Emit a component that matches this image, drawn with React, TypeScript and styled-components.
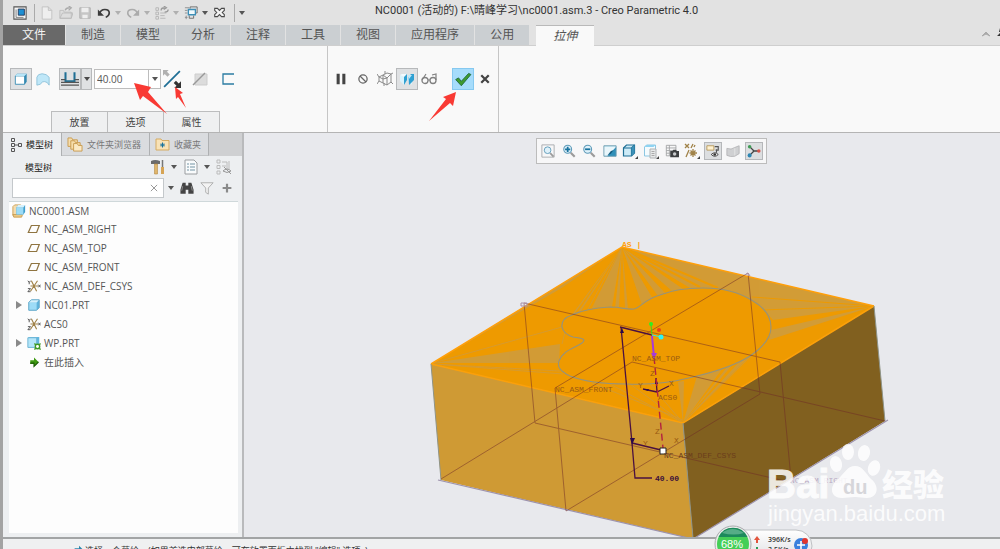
import React from "react";
import styled, { createGlobalStyle, css } from "styled-components";

const GlobalStyle = createGlobalStyle`
  *, *::before, *::after { box-sizing: border-box; }
  body {
    margin: 0;
    background: #a3a3a3;
    color: #4a4a4a;
    font-family: "Open Sans", "Noto Sans CJK SC", sans-serif;
    font-size: 12px;
  }
  button, input {
    margin: 0;
    padding: 0;
    border: 0;
    background: none;
    color: inherit;
    font: inherit;
  }
  ul { margin: 0; padding: 0; list-style: none; }
`;

/* ---------- shell ---------- */

const Window = styled.div`
  display: flex;
  flex-direction: column;
  height: 100vh;
  margin-left: 3px;
  overflow: hidden;
  position: relative;
  background: #e2e2e2;
`;

const TitleBar = styled.header`
  display: flex;
  align-items: center;
  height: 25px;
  flex: none;
`;

const QuickAccess = styled.div`
  display: flex;
  align-items: center;
  flex: 0 0 372px;
  height: 22px;
  padding-left: 7px;
`;

const Title = styled.h1`
  margin: 0;
  height: 22px;
  line-height: 22px;
  font-family: Roboto, "Noto Sans CJK SC", sans-serif;
  font-size: 11px;
  font-weight: 400;
  color: #333;
  white-space: nowrap;
  align-self: flex-start;
`;

const QuickButton = styled.button`
  display: flex;
  align-items: center;
  justify-content: center;
  width: 19px;
  height: 20px;
`;

const CaretButton = styled(QuickButton)<{ $dim?: boolean }>`
  width: 10px;
  color: ${(p) => (p.$dim ? "#b0b0b0" : "#555")};
`;

const Divider = styled.span`
  width: 1px;
  height: 18px;
  margin: 0 2px 0 5px;
  background: #aaa;
`;

const TabBar = styled.nav`
  display: flex;
  align-items: flex-end;
  gap: 1px;
  height: 21px;
  flex: none;
  border-bottom: 1px solid #cfcfcf;
`;

const RibbonTab = styled.button<{ $kind?: "file" | "active" }>`
  height: 20px;
  padding: 0 15px;
  line-height: 20px;
  background: #cbcfd2;
  color: #555;
  ${(p) =>
    p.$kind === "file" &&
    css`
      padding: 0 19px;
      background: #696969;
      color: #f4f4f4;
    `}
  ${(p) =>
    p.$kind === "active" &&
    css`
      height: 21px;
      margin: 0 0 -1px 6px;
      padding: 0 17px;
      border-top: 1px solid #b9b9b9;
      background: #f9f9f9;
      font-style: italic;
      line-height: 18px;
    `}
`;

const TabBarTools = styled.div`
  display: flex;
  align-items: center;
  gap: 6px;
  height: 26px;
  margin-left: auto;
  overflow: hidden;
`;

/* ---------- ribbon ---------- */

const Ribbon = styled.section`
  position: relative;
  display: flex;
  height: 87px;
  flex: none;
  background: #f9f9f9;
  border-bottom: 1px solid #b4b4b4;
`;

const RibbonGroup = styled.div<{ $width: number; $pad: number }>`
  display: flex;
  flex-direction: column;
  justify-content: space-between;
  flex: 0 0 ${(p) => p.$width}px;
  padding: 22px 0 0 ${(p) => p.$pad}px;
  border-right: 1px solid #c6c6c6;
`;

const ControlRow = styled.div`
  display: flex;
  align-items: center;
  height: 22px;
`;

const ToolButton = styled.button<{ $tone?: "pressed" | "ok"; $before?: number; $narrow?: boolean }>`
  display: flex;
  align-items: center;
  justify-content: center;
  flex: none;
  width: ${(p) => (p.$narrow ? 11 : 22)}px;
  height: 22px;
  margin-left: ${(p) => p.$before ?? 0}px;
  border: 1px solid transparent;
  ${(p) =>
    p.$tone === "pressed" &&
    css`
      background: #dfe1e3;
      border-color: #b7b9bb;
    `}
  ${(p) =>
    p.$tone === "ok" &&
    css`
      background: #a6dcfb;
      border-color: #86c9f0;
    `}
`;

const Combo = styled.div`
  display: flex;
  width: 67px;
  height: 20px;
  margin-left: 2px;
  border: 1px solid #bdbdbd;
  background: #fff;
`;

const ComboInput = styled.input`
  flex: 1;
  min-width: 0;
  padding: 0 2px;
  font-size: 10px;
  color: #555;
`;

const ComboCaret = styled(CaretButton)`
  width: 12px;
  height: 18px;
  border-left: 1px solid #bdbdbd;
`;

const PanelTabs = styled.div`
  display: flex;
  margin-left: 41px;
`;

const PanelTab = styled.button`
  width: 57px;
  height: 21px;
  margin-right: -1px;
  padding-top: 1px;
  border: 1px solid #bcbdbe;
  border-bottom: 0;
  background: #eff0f1;
  font-size: 10px;
  line-height: 19px;
  color: #444;
`;

const Pointers = styled.svg`
  position: absolute;
  left: 0;
  top: 0;
  pointer-events: none;
`;

/* ---------- model tree ---------- */

const Main = styled.main`
  display: flex;
  flex: 1;
  min-height: 0;
`;

const SidePanel = styled.aside`
  display: flex;
  flex-direction: column;
  flex: 0 0 241px;
  background: #edeff1;
  border-right: 2px solid #b9babc;
`;

const SideTabs = styled.div`
  display: flex;
  height: 23px;
  background: #cfd0d2;
`;

const SideTab = styled.button<{ $active?: boolean; $width: number }>`
  display: flex;
  align-items: center;
  gap: 4px;
  width: ${(p) => p.$width}px;
  padding-left: ${(p) => (p.$active ? 7 : 5)}px;
  border-right: 1px solid #aeb0b2;
  border-bottom: ${(p) => (p.$active ? "0" : "1px solid #c3c5c7")};
  background: ${(p) => (p.$active ? "#edeff1" : "#dadcdf")};
  color: ${(p) => (p.$active ? "#222" : "#777")};
  font-size: 9px;
  white-space: nowrap;
`;

const TreeHeader = styled.div`
  display: flex;
  align-items: center;
  height: 22px;
  padding: 0 9px 0 22px;
`;

const TreeTitle = styled.h2`
  flex: 1;
  margin: 0;
  font-size: 9px;
  font-weight: 400;
  color: #222;
`;

const HeaderTools = styled.div`
  display: flex;
  align-items: center;
  gap: 2px;
`;

const SearchRow = styled.div`
  display: flex;
  align-items: center;
  height: 20px;
  padding: 0 5px 0 9px;
`;

const SearchBox = styled.div`
  display: flex;
  align-items: center;
  width: 152px;
  height: 20px;
  border: 1px solid #c4c8cb;
  background: #fff;
`;

const SearchInput = styled.input`
  flex: 1;
  min-width: 0;
  height: 16px;
  padding: 0 4px;
  font-size: 10px;
`;

const SearchTools = styled.div`
  display: flex;
  align-items: center;
  flex: 1;
  justify-content: space-between;
  margin-left: 2px;
`;

const TreeList = styled.ul`
  flex: 1;
  margin: 3px 4px 4px 6px;
  border-top: 1px solid #cfd8da;
  background: #fdfdfd;
`;

const TreeRow = styled.li<{ $root?: boolean }>`
  display: flex;
  align-items: center;
  height: ${(p) => (p.$root ? 17 : 19)}px;
  padding-left: ${(p) => (p.$root ? 3 : 7)}px;
  font-size: 10px;
  color: #555;
`;

const Expander = styled.span`
  display: flex;
  width: 11px;
`;

const NodeIcon = styled.span`
  display: flex;
  justify-content: center;
  width: 14px;
  margin-right: 3px;
`;

/* ---------- graphics area ---------- */

const Viewport = styled.section`
  position: relative;
  flex: 1;
  min-width: 0;
  overflow: hidden;
  background: #e8e9ed;
`;

const Scene = styled.svg`
  display: block;
  width: 100%;
  height: 100%;
`;

const ViewToolbar = styled.div`
  position: absolute;
  left: 292px;
  top: 5px;
  display: flex;
  align-items: center;
  justify-content: space-between;
  width: 231px;
  height: 26px;
  padding: 0 3px 0 2px;
  border: 1px solid #bcbcbc;
  background: #f7f7f8;
`;

const ViewButton = styled.button<{ $on?: boolean }>`
  display: flex;
  align-items: center;
  justify-content: center;
  width: 18px;
  height: 18px;
  border: 1px solid ${(p) => (p.$on ? "#b5b7ba" : "transparent")};
  background: ${(p) => (p.$on ? "#dcdee0" : "none")};
`;

const StatusBar = styled.footer`
  display: flex;
  align-items: flex-start;
  gap: 1px;
  height: 12px;
  flex: none;
  overflow: hidden;
  padding: 6px 0 0 71px;
  border-top: 2px solid #a2a4a5;
  background: #eff0f1;
  font-size: 9px;
  line-height: 12px;
  color: #333;
  white-space: nowrap;
`;

const SpeedMeter = styled.svg`
  position: absolute;
  left: 708px;
  bottom: 0;
`;

/* ---------- icons ---------- */

const Svg = ({ s = 16, children }: { s?: number; children: React.ReactNode }) => (
  <svg width={s} height={s} viewBox="0 0 16 16" fill="none" aria-hidden="true">
    {children}
  </svg>
);

const Caret = () => (
  <svg width="6" height="4" viewBox="0 0 6 4" aria-hidden="true">
    <path d="M0 0h6L3 4z" fill="currentColor" />
  </svg>
);

const Magnifier = () => (
  <>
    <path d="M10 10l4.500 4.500" stroke="#9b9b9b" strokeWidth="2.500" />
    <circle cx="6.500" cy="6" r="4.500" fill="#dff1fa" stroke="#5d9ab8" strokeWidth="1.200" />
  </>
);

const CsysGlyph = () => (
  <Svg s={14}>
    <path d="M8 8h5M8 8L5 2M8 8l-4 6M8 8l4-6M8 8l3 6M8 8H4" stroke="#a08248" strokeWidth="1.300" />
    <path d="M1 2l1.500 2L4 2M2.500 4v2M1 11h3l-3 3.500h3M13 6.500l2.500 3M15.500 6.500l-2.500 3" stroke="#444" />
  </Svg>
);

const PlaneGlyph = () => (
  <Svg s={14}>
    <path d="M5 4h9l-3 8H1.500z" stroke="#8f7440" strokeWidth="1.400" />
  </Svg>
);

const PartGlyph = () => (
  <Svg s={14}>
    <path d="M2 5l3-3h9v9l-3 3H2z" fill="#5fb4dc" />
    <path d="M2 5h9v9H2z" fill="#9ddcf7" />
    <path d="M5 2h9l-3 3H2z" fill="#d6f1fc" />
    <path d="M2 5l3-3h9v9l-3 3H2z" stroke="#5ba3c6" />
  </Svg>
);

const AssemblyGlyph = () => (
  <Svg s={14}>
    <path d="M1 3l2-2h7v13H3l-2-1z" fill="#f3dcae" stroke="#c99b4f" />
    <path d="M1 12h11l-1 3H2z" fill="#e9c987" stroke="#c99b4f" />
    <path d="M5 4l2-3h8v8l-2 3H5z" fill="#3e9ccb" />
    <path d="M5 4h8v8H5z" fill="#9ddcf7" />
    <path d="M7 1h8l-2 3H5z" fill="#d6f1fc" />
  </Svg>
);

const WorkpieceGlyph = () => (
  <Svg s={14}>
    <path d="M1 2l2-1h11v10l-2 2H1z" fill="#62b7df" />
    <path d="M1 2h10v11H1z" fill="#b4e6fa" stroke="#6bb2d2" />
    <circle cx="12" cy="12" r="2.500" fill="#fff" stroke="#3f9a23" strokeWidth="1.600" />
    <path d="M8.500 8.500l1.500 1.500M14 10l1.500-1.500M8.500 15.500L10 14M14 14l1.500 1.500" stroke="#3f9a23" strokeWidth="1.600" />
  </Svg>
);

const InsertGlyph = () => (
  <Svg s={12}>
    <path d="M3 5.500h5V2l6 6-6 6v-3.500H3z" fill="#3f9a12" />
    <path d="M3 9.500h5V14l6-6" stroke="#1c5d05" strokeWidth="1.500" />
  </Svg>
);

const FolderShape = ({ x = 0, y = 0 }: { x?: number; y?: number }) => (
  <path d={`M${x} ${y}h4l1 2h5v7H${x}z`} fill="#f6ddab" stroke="#c99b4f" />
);

const treeNodes = [
  { name: "NC0001.ASM", icon: <AssemblyGlyph />, root: true },
  { name: "NC_ASM_RIGHT", icon: <PlaneGlyph /> },
  { name: "NC_ASM_TOP", icon: <PlaneGlyph /> },
  { name: "NC_ASM_FRONT", icon: <PlaneGlyph /> },
  { name: "NC_ASM_DEF_CSYS", icon: <CsysGlyph /> },
  { name: "NC01.PRT", icon: <PartGlyph />, closed: true },
  { name: "ACS0", icon: <CsysGlyph /> },
  { name: "WP.PRT", icon: <WorkpieceGlyph />, closed: true },
  { name: "在此插入", icon: <InsertGlyph /> },
];

const menuTabs = ["制造", "模型", "分析", "注释", "工具", "视图", "应用程序", "公用"];

const viewTools = [
  {
    label: "重新调整",
    icon: (
      <Svg s={14}>
        <path d="M1 1h14v14H1z" stroke="#a5a8aa" />
        <g transform="translate(2 2) scale(.85)"><Magnifier /></g>
      </Svg>
    ),
  },
  {
    label: "放大",
    icon: (
      <Svg s={14}>
        <Magnifier />
        <path d="M3.500 6h6M6.500 3v6" stroke="#17729e" strokeWidth="2" />
      </Svg>
    ),
  },
  {
    label: "缩小",
    icon: (
      <Svg s={14}>
        <Magnifier />
        <path d="M3.500 6h6" stroke="#17729e" strokeWidth="2" />
      </Svg>
    ),
  },
  {
    label: "重画",
    icon: (
      <Svg s={14}>
        <path d="M1 2h14v12H1z" fill="#bfe4f3" />
        <path d="M15 3v11H5z" fill="#2f8fb8" />
        <path d="M1 3h14L5 13H1z" fill="#e9f6fb" />
        <path d="M1 2h14v12H1z" stroke="#6c9aae" />
        <path d="M5 13l4-5 3-1-3 4z" fill="#145c80" />
      </Svg>
    ),
  },
  {
    label: "显示样式",
    icon: (
      <Svg s={16}>
        <path d="M1.500 5l3-3h8v8l-3 3h-8z" fill="#cdebf7" stroke="#1f6f95" strokeWidth="1.200" />
        <path d="M1.500 5h8v8M9.500 5l3-3" stroke="#1f6f95" strokeWidth="1.200" />
        <path d="M9.500 5l3-3v8l-3 3z" fill="#3c91b8" />
        <path d="M16 13v3h-3z" fill="#444" />
      </Svg>
    ),
  },
  {
    label: "已保存方向",
    icon: (
      <Svg s={16}>
        <path d="M1.500 4l2-2h9v9l-2 2h-9z" fill="#f4fbfe" stroke="#8dc7e2" />
        <path d="M1.500 4l2-2h9l-2 2z" fill="#8ed3f2" />
        <path d="M7 6h6v9H7z" fill="#e6e8e9" stroke="#b0b3b5" />
        <path d="M8.500 8.500h3M8.500 10.500h3M8.500 12.500h3" stroke="#aaa" />
        <path d="M16 13v3h-3z" fill="#444" />
      </Svg>
    ),
  },
  {
    label: "视图管理器",
    icon: (
      <Svg s={14}>
        <path d="M1.500 1.500h11v12h-11zM1.500 4.500h11M1.500 7.500h11M1.500 10.500h11M5 1.500v12" stroke="#a0a2a4" />
        <path d="M6 8h2.500l1-1.500h3L13.500 8H16v7H6z" fill="#3d3f41" />
        <circle cx="11" cy="11.500" r="2" fill="#c9cbcd" />
      </Svg>
    ),
  },
  {
    label: "基准显示过滤器",
    icon: (
      <Svg s={16}>
        <path d="M1 1l4 4M5 1L1 5M9 1L7 5M5 7l-3 7M10 4l1-2M9 6v8M5.500 10H13M6.500 7.500l5 5M11.500 7.500l-5 5" stroke="#a08248" strokeWidth="1.300" />
        <path d="M16 13v3h-3z" fill="#444" />
      </Svg>
    ),
  },
  {
    label: "注释显示",
    on: true,
    icon: (
      <Svg s={14}>
        <path d="M1 2h8v5H1z" fill="#fff1cf" stroke="#b69759" />
        <path d="M10 3h4v4h-3M12 6v4" stroke="#555" strokeWidth="1.300" />
        <path d="M6 12q4-4 8 0-4 4-8 0z" fill="#fff" stroke="#333" />
        <circle cx="10" cy="12" r="1.500" fill="#333" />
      </Svg>
    ),
  },
  {
    label: "截面",
    icon: (
      <Svg s={14}>
        <path d="M1 5q5 2 9-1l5-2v9l-5 3q-5 1-9-1z" fill="#cfd0d2" stroke="#b3b4b6" />
        <path d="M10 5v8" stroke="#e6e6e6" />
      </Svg>
    ),
  },
  {
    label: "旋转中心",
    on: true,
    icon: (
      <Svg s={14}>
        <path d="M3 3l5 5-5 5M8 8h6" stroke="#444" strokeWidth="1.600" />
        <circle cx="3" cy="3" r="2" fill="#3f9b55" />
        <circle cx="3" cy="13" r="2.300" fill="#2d86b3" />
        <circle cx="13.500" cy="8" r="2" fill="#d9534a" />
      </Svg>
    ),
  },
];

const Model = () => (
  <Scene viewBox="244 133 756 404" preserveAspectRatio="xMinYMin slice" role="img" aria-label="模型">
    <defs>
      <clipPath id="topFace">
        <path d="M622 247L874 306 683 423 431 364z" />
      </clipPath>
    </defs>

    <path d="M431 364L683 423 693 539 441 480z" fill="#cf9a34" />
    <path d="M683 423L874 306 885 421 693 539z" fill="#81601f" />
    <path d="M622 247L874 306 683 423 431 364z" fill="#ee9a00" />

    <g clipPath="url(#topFace)" fill="#d29c36">
      <path d="M431 364L622 247 560 289 520 312z" />
      <path d="M433 363L560 344 559 363z" />
      <path d="M622 247L571 316 575 313zM622 247L578 312 581 311z" />
      <path d="M622 247L592 308 612 307zM622 247L615 308 619 308zM622 247L625 308 628 309z" />
      <path d="M622 247L642 305 653 299zM622 247L658 296 665 293zM622 247L672 291 683 289z" />
      <path d="M622 247L690 288Q735 286 760 306L773 320 874 306z" />
      <path d="M771 330L874 306 769 340z" />
      <path d="M683 423L678 382 684 381zM683 423L697 376 722 369zM683 423L727 367 733 364zM683 423L740 361 750 356z" />
    </g>
    <g clipPath="url(#topFace)" fill="none" stroke="#cf9a3c" strokeWidth="1" opacity=".8">
      <path d="M433 363L562 327M433 364L560 371M433 364L563 374M683 423L610 384M683 423L630 384M683 423L650 384M683 420L592 383" />
      <path d="M562 344L565 332M622 247L588 309M683 423L757 350" />
    </g>
    <g clipPath="url(#topFace)" fill="none" stroke="#ee9a00" strokeWidth="2">
      <path d="M622 247L700 287M622 247L718 288" />
      <path d="M874 306L752 297M874 306L762 310" strokeWidth="1" />
    </g>

    <path
      d="M562 327C561 320 566 317 572 315C580 311 592 308 610 307C622 307 627 310 634 309C640 308 645 299 660 295C672 290 690 288 703 288C720 288 739 292 753 301C765 308 771 317 771 327C771 339 762 348 750 356C733 367 710 373 693 377C670 383 647 385 627 384C606 384 585 382 570 376C560 371 557 367 559 361C563 350 575 348 582 343C588 338 578 338 573 337C567 335 563 332 562 327z"
      fill="#ee9a00"
      stroke="#97937a"
      strokeWidth="1.200"
    />

    <path d="M431 364L622 247 874 306" fill="none" stroke="#ff9f0a" strokeWidth="1.500" />
    <path d="M431 364L683 423 874 306" fill="none" stroke="#fba00a" strokeWidth="1.500" />
    <path d="M431 364L441 480M683 423L693 538M874 306L885 421" fill="none" stroke="#8f9488" />
    <path d="M438 480L693 539 888 420" fill="none" stroke="#9d93ad" strokeWidth="1.200" />

    <g fill="none" stroke="#6f2a28" opacity=".5">
      <path d="M524 303L780 362 791 479M524 303L535 423 785 481" />
      <path d="M748 273L555 388 566 511 760 394z" />
      <path d="M885 421L632 362 441 479" />
    </g>
    <path d="M521 303h6v3h-6zM745 275l3-2 2 3" fill="none" stroke="#a990a8" />

    <g fill="none" stroke="#4a1040" strokeWidth="1.300">
      <path d="M652 335L620 327M621 327L632 443 635 478H652M632 443L661 450" />
      <path d="M657 392L656 378M657 392L643 389M657 392L669 386" />
    </g>
    <path d="M620 333l2-5 2 5zM630 438l2 7 3-7zM655 384l1-6 2 6zM643 389l6 0-1 2z" fill="#2b0a4a" />
    <path d="M654 357L663 448" stroke="#b32240" strokeWidth="1.400" strokeDasharray="7 4" />
    <path d="M652 336L654 357" stroke="#a63adb" strokeWidth="2" />
    <path d="M651 353h6l-3 6z" fill="#a63adb" />
    <path d="M652 335l-1-10" stroke="#3ad81a" />
    <path d="M652 335l9 2" stroke="#30e6e0" />
    <circle cx="651" cy="324" r="2" fill="#30f020" />
    <circle cx="659" cy="330" r="2" fill="#ee3b1b" />
    <circle cx="661" cy="337" r="2.500" fill="#2ff3f3" />
    <path d="M660 448h6v6h-6z" fill="#fff" stroke="#222" />

    <g fontFamily="Liberation Mono, monospace" fontSize="8" fill="#9a5a12">
      <text x="632" y="361">NC_ASM_TOP</text>
      <text x="555" y="392">NC_ASM_FRONT</text>
      <text x="658" y="400">ACS0</text>
      <text x="664" y="458" fill="#6b3d1c">NC_ASM_DEF_CSYS</text>
      <text x="790" y="483" fill="#b9a9c4">NC_ASM_RIGHT</text>
      <text x="650" y="376">Z</text>
      <text x="638" y="388">Y</text>
      <text x="669" y="386">X</text>
      <text x="655" y="434">Z</text>
      <text x="643" y="446">Y</text>
      <text x="674" y="443">X</text>
      <text x="655" y="481" fill="#3b0f3a" fontWeight="700">40.00</text>
      <text x="622" y="247" fill="#ff9f0a" fontWeight="700">AS |</text>
    </g>

    <g fill="#fff" opacity=".85">
      <text x="767" y="498" fontFamily="Liberation Sans, sans-serif" fontSize="40" fontWeight="700" stroke="#fff" strokeWidth="1">Bai</text>
      <ellipse cx="836" cy="464" rx="6" ry="8" transform="rotate(-12 836 464)" />
      <ellipse cx="848" cy="452" rx="6" ry="8" />
      <ellipse cx="864" cy="453" rx="6" ry="8" transform="rotate(12 864 453)" />
      <ellipse cx="874" cy="468" rx="6" ry="8" transform="rotate(20 874 468)" />
      <path d="M855 466c8 0 11 8 16 13 9 7 7 19-4 19-5 0-7-1-12-1s-8 1-13 1c-12 0-13-12-4-19 6-5 9-13 17-13z" />
      <text x="882" y="496" fontFamily="Noto Sans CJK SC, sans-serif" fontSize="31" fontWeight="900">经验</text>
      <text x="768" y="521" fontFamily="Liberation Sans, sans-serif" fontSize="22">jingyan.baidu.com</text>
    </g>
    <text x="843" y="494" fontFamily="Liberation Sans, sans-serif" fontSize="20" fontWeight="700" fill="#d6d6da">du</text>
  </Scene>
);

export default function App() {
  return (
    <>
      <GlobalStyle />
      <Window>
        <TitleBar>
          <QuickAccess>
            <QuickButton aria-label="窗口">
              <Svg s={14}>
                <path d="M1 1h14v14H1z" fill="#f6f6f6" stroke="#555" strokeWidth="1.200" />
                <path d="M6 3.500h7v7H6z" fill="#1d8fd3" stroke="#235" />
                <path d="M3.500 4v9H12" stroke="#777" />
              </Svg>
            </QuickButton>
            <Divider />
            <QuickButton aria-label="新建">
              <Svg s={14}><path d="M2.500 1h7l4 4v10h-11zM9.500 1v4h4" fill="#eee" stroke="#c0c0c0" /></Svg>
            </QuickButton>
            <QuickButton aria-label="打开">
              <Svg s={14}>
                <path d="M1 5h4l1 2h8v7H1zM1 14l3-6h12l-2 6z" fill="#ddd" stroke="#bbb" />
                <path d="M7 5q1-3 5-3M11 0l3 2-3 3" stroke="#aaa" strokeWidth="1.500" />
              </Svg>
            </QuickButton>
            <QuickButton aria-label="保存">
              <Svg s={14}>
                <path d="M2 2h12v12H2z" fill="#c6c6c6" stroke="#aeaeae" />
                <path d="M4 2h8v5H4zM5 10h6v4H5z" fill="#eee" />
              </Svg>
            </QuickButton>
            <QuickButton aria-label="撤消">
              <Svg s={14}>
                <path d="M3 9q1-5 6-5t5 4q0 3-4 5" stroke="#3c3c3c" strokeWidth="1.900" />
                <path d="M1 4v7h7z" fill="#3c3c3c" />
              </Svg>
            </QuickButton>
            <CaretButton $dim aria-label="撤消列表"><Caret /></CaretButton>
            <QuickButton aria-label="重做">
              <Svg s={14}>
                <path d="M13 9q-1-5-6-5T2 8q0 3 4 5" stroke="#ababab" strokeWidth="1.800" />
                <path d="M15 4v7H8z" fill="#ababab" />
              </Svg>
            </QuickButton>
            <CaretButton $dim aria-label="重做列表"><Caret /></CaretButton>
            <QuickButton aria-label="重新生成">
              <Svg s={14}>
                <path d="M1 2h3v3H1zM1 7h3v3H1zM1 12h3v3H1zM6 8h7M6 11h5M6 14h6" stroke="#b4b4b4" />
                <path d="M7 5q0-3 4-3M10 0l3 2-3 2M15 4q0 3-4 3" stroke="#9a9a9a" strokeWidth="1.500" />
              </Svg>
            </QuickButton>
            <CaretButton $dim aria-label="重新生成列表"><Caret /></CaretButton>
            <QuickButton aria-label="切换窗口">
              <Svg s={14}>
                <path d="M1 2h5M1 5h3M1 8h3M1 13h3M2.500 11v4" stroke="#888" />
                <path d="M7 3V1h8v7h-2" stroke="#666" />
                <path d="M5 4h8v6H5z" fill="#f1fafd" stroke="#3d8fb7" strokeWidth="1.500" />
                <path d="M6 11v3h5v-3" stroke="#666" />
              </Svg>
            </QuickButton>
            <CaretButton aria-label="窗口列表"><Caret /></CaretButton>
            <QuickButton aria-label="关闭">
              <Svg s={11}>
                <path d="M1 2h4l3 3 3-3h4v3l-3 3 3 3v3h-4l-3-3-3 3H1v-3l3-3-3-3z" fill="#f4f4f4" stroke="#4a4a4a" strokeWidth="1.500" />
              </Svg>
            </QuickButton>
            <Divider />
            <CaretButton aria-label="自定义"><Caret /></CaretButton>
          </QuickAccess>
          <Title>NC0001 (活动的) F:\晴峰学习\nc0001.asm.3 - Creo Parametric 4.0</Title>
        </TitleBar>

        <TabBar>
          <RibbonTab $kind="file">文件</RibbonTab>
          {menuTabs.map((t) => (
            <RibbonTab key={t}>{t}</RibbonTab>
          ))}
          <RibbonTab $kind="active">拉伸</RibbonTab>
          <TabBarTools>
            <button aria-label="最小化功能区">
              <svg width="10" height="6" viewBox="0 0 10 6"><path d="M1 5l4-4 4 4-4-2z" fill="#aaa" stroke="#aaa" /></svg>
            </button>
            <svg width="3" height="10" viewBox="0 0 3 10" aria-hidden="true"><path d="M3 1v4H2zM3 6L0 9h3z" fill="#333" /></svg>
          </TabBarTools>
        </TabBar>

        <Ribbon>
          <RibbonGroup $width={325} $pad={7}>
            <ControlRow>
              <ToolButton $tone="pressed" aria-label="实体">
                <Svg s={14}>
                  <path d="M1.500 5l2-3h11v9l-2 3h-11z" fill="#3489b2" />
                  <path d="M1.500 4.500h10.500v9.500H1.500z" fill="#fff" stroke="#3f8fb5" />
                  <path d="M1.500 4.500l2-2.500h11l-2.500 2.500z" fill="#b6e4f7" />
                </Svg>
              </ToolButton>
              <ToolButton aria-label="曲面">
                <Svg s={14}><path d="M1 6q1-4 6-4 5 0 8 4v9q-2-4-5-4-3-1-5 3l-4 1z" fill="#bfe7f8" stroke="#8cc0d8" /></Svg>
              </ToolButton>
              <ToolButton $tone="pressed" $before={5} aria-label="深度">
                <Svg s={18}>
                  <path d="M4 2v8h8V2" stroke="#1f6f95" strokeWidth="1.800" />
                  <path d="M0 8.500h4M12 8.500h4M0 11h16M0 13.500h16" stroke="#555" strokeWidth="1.200" />
                </Svg>
              </ToolButton>
              <ToolButton $tone="pressed" $narrow aria-label="深度选项"><Caret /></ToolButton>
              <Combo>
                <ComboInput aria-label="深度值" defaultValue="40.00" />
                <ComboCaret aria-label="深度值列表"><Caret /></ComboCaret>
              </Combo>
              <ToolButton aria-label="反向">
                <Svg s={18}>
                  <path d="M1 15L15 1" stroke="#1f6f95" strokeWidth="1.600" />
                  <path d="M0 0h5L3.500 1.500 6 4 4 6 1.500 3.500 0 5z" fill="#b0b0b0" />
                  <path d="M16 16h-6l2-2-2.500-2.500 2-2L14 12l2-2z" fill="#333" />
                </Svg>
              </ToolButton>
              <ToolButton $before={6} aria-label="移除材料">
                <Svg s={16}>
                  <path d="M3 3h12v11H3z" fill="#dcdcdc" stroke="#cdcdcd" />
                  <path d="M1 14L13 2" stroke="#999" strokeWidth="1.400" />
                </Svg>
              </ToolButton>
              <ToolButton $before={6} aria-label="加厚草绘">
                <Svg s={16}><path d="M14 3H3v10h11" stroke="#2b7ca3" strokeWidth="1.300" /></Svg>
              </ToolButton>
            </ControlRow>
            <PanelTabs>
              <PanelTab>放置</PanelTab>
              <PanelTab>选项</PanelTab>
              <PanelTab>属性</PanelTab>
            </PanelTabs>
          </RibbonGroup>

          <RibbonGroup $width={171} $pad={2}>
            <ControlRow>
              <ToolButton aria-label="暂停"><Svg s={14}><path d="M3 2h3.500v12H3zM9.500 2H13v12H9.500z" fill="#444" /></Svg></ToolButton>
              <ToolButton aria-label="无预览">
                <Svg s={12}><circle cx="8" cy="8" r="5.500" stroke="#666" strokeWidth="1.700" /><path d="M4 4l8 8" stroke="#666" strokeWidth="1.600" /></Svg>
              </ToolButton>
              <ToolButton aria-label="未附着预览">
                <Svg s={16}>
                  <path d="M2 6l4-2v8l-4-2zM6 4l4 3v7l-4-2M10 7l4-4v8l-4 3M6 4l4-2 4 1M2 6l4 2 4-1M0 3l2 3M16 2l-2 1M0 13l2-3M16 13l-2-2M8 0v3M7 15v-3" stroke="#8a8a8a" />
                </Svg>
              </ToolButton>
              <ToolButton $tone="pressed" aria-label="附着预览">
                <Svg s={16}>
                  <path d="M1 4l4 2v8l-4-4zM9 4l4 2v8L9 10z" fill="#d9f3fd" />
                  <path d="M1 4l2-1h5L5 6z" fill="#f1fbff" />
                  <path d="M5 6l3-3v6l-3 5zM9.500 6L12 3h3v6l-5 5z" fill="#2fa0d2" />
                  <path d="M9 4h4l-3 4z" fill="#bfe9fa" />
                </Svg>
              </ToolButton>
              <ToolButton aria-label="验证">
                <Svg s={16}>
                  <circle cx="4" cy="9.500" r="3" stroke="#808080" strokeWidth="1.300" />
                  <circle cx="12" cy="9.500" r="3" stroke="#808080" strokeWidth="1.300" />
                  <path d="M1 9l4-6M7 9h2M15 9V3l-4 1" stroke="#808080" strokeWidth="1.200" />
                </Svg>
              </ToolButton>
              <ToolButton $tone="ok" $before={12} aria-label="确定">
                <Svg s={18}>
                  <path d="M1.500 8.500L4 7l2.500 3L13 3l2 1-8.500 10z" fill="#3f9b2f" stroke="#1f6a3c" strokeWidth=".8" />
                </Svg>
              </ToolButton>
              <ToolButton aria-label="取消">
                <Svg s={12}><path d="M3 3l10 10M13 3L3 13" stroke="#444" strokeWidth="3" /></Svg>
              </ToolButton>
            </ControlRow>
          </RibbonGroup>

          <Pointers width="500" height="86" viewBox="3 46 500 86" fill="#f93a34" aria-hidden="true">
            <path d="M134 83L151 87 148 92 167 114 143 96 140 100z" />
            <path d="M175 87L183 93 180 94 186 108 178 97 176 99z" />
            <path d="M456 92L453 106 450 103 429 121 446 99 443 97z" />
          </Pointers>
        </Ribbon>

        <Main>
          <SidePanel>
            <SideTabs>
              <SideTab $active $width={59}>
                <svg width="12" height="16" viewBox="0 0 12 16" fill="none" stroke="#555" aria-hidden="true">
                  <path d="M1.500 1.500h3v3h-3zM1.500 6.500h3v3h-3zM1.500 11.500h3v3h-3zM8.500 6.500h3v3h-3zM5 8h3" />
                </svg>
                模型树
              </SideTab>
              <SideTab $width={88}>
                <svg width="16" height="15" viewBox="0 0 17 16" aria-hidden="true">
                  <FolderShape x={1} y={1} />
                  <path d="M4 4h4l1 2h5v7H4z" fill="#f6ddab" stroke="#c99b4f" />
                  <path d="M7 7h4l1 2h4v6H7z" fill="#fbe9c4" stroke="#c99b4f" />
                </svg>
                文件夹浏览器
              </SideTab>
              <SideTab $width={59}>
                <svg width="15" height="14" viewBox="0 0 15 14" aria-hidden="true">
                  <path d="M1 2h5l1 1.500h7V13H1z" fill="#f8e2b6" stroke="#d5ab63" />
                  <path d="M7.500 5.500v5M5 8h5M6 6.500l3 3M9 6.500l-3 3" stroke="#17729e" />
                </svg>
                收藏夹
              </SideTab>
            </SideTabs>

            <TreeHeader>
              <TreeTitle>模型树</TreeTitle>
              <HeaderTools>
                <QuickButton aria-label="设置">
                  <Svg s={16}>
                    <path d="M1 2q4-2 9 0v3H1z" fill="#6b6b6b" />
                    <path d="M4.500 5h3v10h-3z" fill="#e0b66c" stroke="#b58c45" strokeWidth=".6" />
                    <path d="M12.500 1v8" stroke="#777" strokeWidth="1.500" />
                    <path d="M11 8h3v7h-3z" fill="#d6a455" />
                  </Svg>
                </QuickButton>
                <CaretButton aria-label="设置列表"><Caret /></CaretButton>
                <QuickButton aria-label="显示">
                  <Svg s={16}>
                    <path d="M2 1h9l3 3v11H2z" fill="#f9fbfc" stroke="#9a9da0" />
                    <path d="M4 5h2M7 5h5M4 8h2M7 8h5M4 11h2M7 11h5" stroke="#7393a3" />
                  </Svg>
                </QuickButton>
                <CaretButton aria-label="显示列表"><Caret /></CaretButton>
                <QuickButton aria-label="树列">
                  <Svg s={16}>
                    <path d="M1 1h3v3H1zM1 6.500h3v3H1zM1 12h3v3H1zM6 3h5v8M13 2v8M6 7h4" stroke="#bbb" />
                    <path d="M7 12q4-4 8 0-4 3-8 0zM8 8l7 7" stroke="#999" />
                  </Svg>
                </QuickButton>
              </HeaderTools>
            </TreeHeader>

            <SearchRow>
              <SearchBox>
                <SearchInput type="text" aria-label="搜索模型树" />
                <QuickButton aria-label="清除">
                  <Svg s={10}><path d="M3 3l10 10M13 3L3 13" stroke="#999" strokeWidth="1.600" /></Svg>
                </QuickButton>
              </SearchBox>
              <SearchTools>
                <CaretButton aria-label="搜索选项"><Caret /></CaretButton>
                <QuickButton aria-label="查找">
                  <Svg s={14}>
                    <path d="M3 2h3.500v3h3V2H13l2.500 8v4.500H9.500V10h-3v4.500H.5V10z" fill="#444" />
                    <path d="M3 6l-1 5M13 6l1 5" stroke="#999" />
                  </Svg>
                </QuickButton>
                <QuickButton aria-label="过滤">
                  <Svg s={14}><path d="M1 2h14l-5.500 6v7l-3-2V8z" fill="#f3f3f3" stroke="#a9a9a9" /></Svg>
                </QuickButton>
                <QuickButton aria-label="添加">
                  <Svg s={14}><path d="M8 3v10M3 8h10" stroke="#8a8a8a" strokeWidth="2.500" /></Svg>
                </QuickButton>
              </SearchTools>
            </SearchRow>

            <TreeList>
              {treeNodes.map((n) => (
                <TreeRow key={n.name} $root={n.root}>
                  {!n.root && (
                    <Expander>
                      {n.closed && (
                        <svg width="6" height="8" viewBox="0 0 6 8" aria-hidden="true"><path d="M0 0l6 4-6 4z" fill="#8a8a8a" /></svg>
                      )}
                    </Expander>
                  )}
                  <NodeIcon>{n.icon}</NodeIcon>
                  {n.name}
                </TreeRow>
              ))}
            </TreeList>
          </SidePanel>

          <Viewport>
            <Model />
            <ViewToolbar role="toolbar">
              {viewTools.map((t) => (
                <ViewButton key={t.label} $on={t.on} aria-label={t.label}>
                  {t.icon}
                </ViewButton>
              ))}
            </ViewToolbar>
          </Viewport>
        </Main>

        <StatusBar>
          <Svg s={10}><path d="M1 5h7V1l7 7-7 7v-4H1z" fill="#2b86ad" /></Svg>
          选择一个草绘。(如果首选内部草绘，可在放置面板中找到 "编辑" 选项。)
        </StatusBar>

        <SpeedMeter width="106" height="24" viewBox="711 525 106 24" role="img" aria-label="网速">
          <defs>
            <linearGradient id="pill" x1="0" y1="0" x2="0" y2="1">
              <stop offset="0" stopColor="#fff" />
              <stop offset="1" stopColor="#dcdde0" />
            </linearGradient>
          </defs>
          <rect x="725" y="530" width="87" height="32" rx="16" fill="url(#pill)" stroke="#bfc1c4" />
          <circle cx="733" cy="544" r="18" fill="#eceded" stroke="#a9abad" />
          <circle cx="733" cy="544" r="16" fill="#45cf57" />
          <path d="M718.500 537a16 16 0 0 1 29 0z" fill="#1c8a5c" />
          <path d="M722 533q10-8 22 0-10 3-22 0z" fill="#7cc4a4" opacity=".6" />
          <text x="721" y="548" fontFamily="Liberation Sans, sans-serif" fontSize="11" fill="#fff">68%</text>
          <path d="M757 536l3 4h-2v3h-2v-3h-2z" fill="#e2553d" />
          <path d="M756 547h2v2h-2z" fill="#2c9b55" />
          <text x="768" y="542" fontFamily="Open Sans, sans-serif" fontSize="7" fontWeight="600" fill="#333">396K/s</text>
          <text x="768" y="552" fontFamily="Open Sans, sans-serif" fontSize="7" fontWeight="600" fill="#333">3.5K/s</text>
          <circle cx="801" cy="545" r="7" fill="#3a80dd" />
          <path d="M797 545h8M801 541v8" stroke="#fff" strokeWidth="1.600" />
          <circle cx="805" cy="541" r="3" fill="#e0352f" />
        </SpeedMeter>
      </Window>
    </>
  );
}
